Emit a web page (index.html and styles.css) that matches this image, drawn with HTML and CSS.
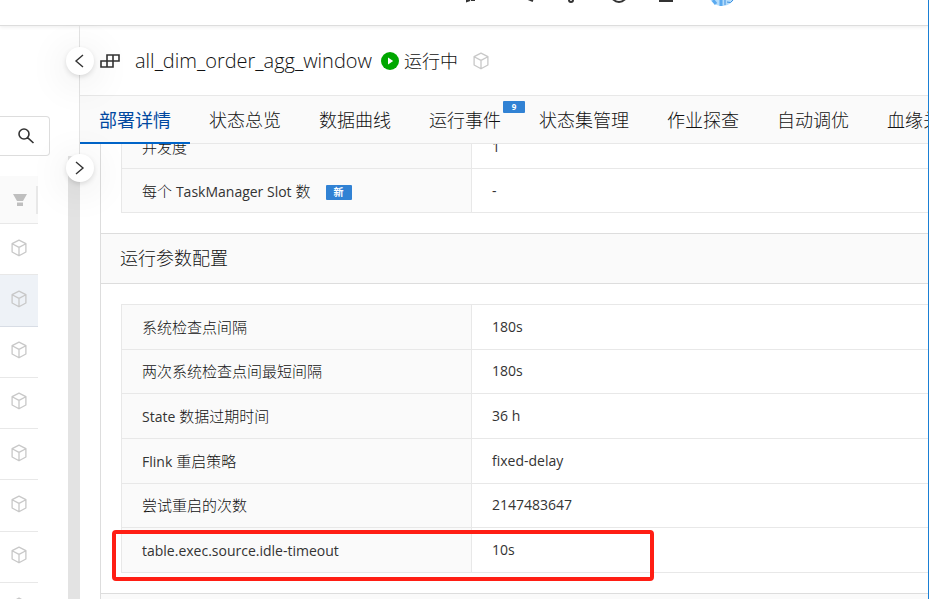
FILE: index.html
```
<!DOCTYPE html>
<html lang="zh-CN">
<head>
    <meta charset="UTF-8">
    <title>all_dim_order_agg_window</title>
    <link rel="stylesheet" href="styles.css">
</head>
<body>
    <svg class="defs" aria-hidden="true">
        <symbol id="cube" viewBox="0 0 18 18">
            <path d="M9 1.2 15.9 4.7V13L9 16.8 2.1 13V4.7ZM2.1 4.7 9 8.4 15.9 4.7M9 8.4V16.8" fill="none" stroke="currentColor" stroke-width="1.3" stroke-linejoin="round"/>
        </symbol>
    </svg>

    <header class="topbar">
        <svg class="topbar-icons" width="280" height="7" viewBox="460 0 280 7" aria-hidden="true">
            <g fill="none" stroke="#333" stroke-width="2">
                <path d="M467 0V1L470 0M471 0H475"/>
                <path d="M528 -1 533 1"/>
                <circle cx="571" cy="0" r="2"/>
                <circle cx="619" cy="-6" r="8"/>
                <path d="M659 1H673"/>
            </g>
            <circle cx="722" cy="-8" r="14" fill="#b4dcfb"/>
            <path d="M713 0 716 4M721 0V6" stroke="#5aaaf0" stroke-width="3"/>
            <path d="M725 0V5M727 2Q731 4 733 0" fill="none" stroke="#3b8fe0"/>
        </svg>
    </header>

    <div class="layout">
        <aside class="sidebar">
            <button class="search" aria-label="搜索">
                <svg width="18" height="18" viewBox="0 0 18 18"><path d="M12 7A5 5 0 1 1 2 7A5 5 0 1 1 12 7M10.6 10.6 16.5 16" fill="none" stroke="#333" stroke-width="1.6"/></svg>
            </button>
            <div class="filter">
                <svg width="14" height="14" viewBox="0 0 14 14"><path d="M0 1H14L10 8H4ZM4 9.5H10V13H4Z" fill="#bfbfbf"/></svg>
            </div>
            <table class="jobs">
                <tr><td><svg class="cube"><use href="#cube"/></svg></td></tr>
                <tr class="selected"><td><svg class="cube"><use href="#cube"/></svg></td></tr>
                <tr><td><svg class="cube"><use href="#cube"/></svg></td></tr>
                <tr><td><svg class="cube"><use href="#cube"/></svg></td></tr>
                <tr><td><svg class="cube"><use href="#cube"/></svg></td></tr>
                <tr><td><svg class="cube"><use href="#cube"/></svg></td></tr>
                <tr><td><svg class="cube"><use href="#cube"/></svg></td></tr>
                <tr><td><svg class="cube"><use href="#cube"/></svg></td></tr>
            </table>
            <div class="splitter"></div>
            <button class="toggle toggle-left" aria-label="收起">
                <svg width="12" height="14" viewBox="0 0 12 14"><path d="M9 1 2 7 9 13" fill="none" stroke="#333" stroke-width="1.4"/></svg>
            </button>
            <button class="toggle toggle-right" aria-label="展开">
                <svg width="12" height="14" viewBox="0 0 12 14"><path d="M2 1 9 7 2 13" fill="none" stroke="#333" stroke-width="1.4"/></svg>
            </button>
        </aside>

        <main class="main">
            <div class="title-bar">
                <svg width="20" height="14" viewBox="0 0 20 14"><path d="M7 1H19V7H7ZM1 7H13V13H1ZM7 7V13M13 1V7" fill="none" stroke="#333" stroke-width="1.6"/></svg>
                <h1>all_dim_order_agg_window</h1>
                <svg width="18" height="18" viewBox="0 0 18 18"><circle cx="9" cy="9" r="9" fill="#00a700"/><path d="M7 5.5 12.2 9 7 12.5Z" fill="#fff"/></svg>
                <span class="state">运行中</span>
                <svg class="cube"><use href="#cube"/></svg>
            </div>
            <nav class="tabs">
                <a class="active" href="#detail">部署详情</a>
                <a href="#status">状态总览</a>
                <a href="#metrics">数据曲线</a>
                <a href="#events">运行事件<span class="count">9</span></a>
                <a href="#state">状态集管理</a>
                <a href="#explore">作业探查</a>
                <a href="#tuning">自动调优</a>
                <a href="#lineage">血缘关系</a>
            </nav>
            <div class="viewport">
                <div class="content">
                    <div class="group">
                        <table class="params">
                            <tr><th scope="row">并发度</th><td>1</td></tr>
                            <tr><th scope="row">每个 <span class="en">TaskManager Slot</span> 数<span class="new">新</span></th><td>-</td></tr>
                        </table>
                    </div>
                    <h2>运行参数配置</h2>
                    <div class="group">
                        <table class="params params-runtime">
                            <tr><th scope="row">系统检查点间隔</th><td>180s</td></tr>
                            <tr><th scope="row">两次系统检查点间最短间隔</th><td>180s</td></tr>
                            <tr><th scope="row"><span class="en">State</span> 数据过期时间</th><td>36 h</td></tr>
                            <tr><th scope="row"><span class="en">Flink</span> 重启策略</th><td>fixed-delay</td></tr>
                            <tr><th scope="row">尝试重启的次数</th><td>2147483647</td></tr>
                            <tr><th scope="row"><span class="en">table.exec.source.idle-timeout</span></th><td>10s</td></tr>
                        </table>
                        <div class="highlight"></div>
                    </div>
                    <h2>日志配置</h2>
                </div>
            </div>
        </main>
    </div>
</body>
</html>
```
FILE: styles.css
```
* { box-sizing: border-box; }
body {
    margin: 0;
    height: 100vh;
    display: flex;
    flex-direction: column;
    overflow: hidden;
    border-right: 1px solid #1a7fd4;
    background: #fff;
    color: #111;
    font-family: "Open Sans", "Noto Sans CJK SC", sans-serif;
    font-size: 15px;
    font-weight: 300;
}
svg { display: block; flex: none; }
button { padding: 0; background: #fff; cursor: pointer; }
.defs { position: absolute; width: 0; height: 0; }
.cube { width: 18px; height: 18px; color: #c8c8c8; }

.topbar {
    flex: none;
    height: 26px;
    padding-left: 460px;
    border-bottom: 1px solid #ddd;
    box-shadow: 0 1px 4px rgba(0, 0, 0, 0.08);
}
.layout { flex: 1; display: flex; min-height: 0; }

/* 左侧作业列表 */
.sidebar { position: relative; z-index: 1; flex: none; width: 80px; padding-top: 90px; border-right: 1px solid #e3e3e3; }
.search {
    display: flex;
    align-items: center;
    justify-content: flex-end;
    width: 50px;
    height: 40px;
    padding-right: 14px;
    border: 1px solid #ddd;
    border-left: 0;
    border-radius: 0 4px 4px 0;
}
.filter {
    display: flex;
    align-items: center;
    width: 38px;
    height: 48px;
    margin-top: 20px;
    padding-left: 13px;
    border-bottom: 1px solid #e8e8e8;
    background: linear-gradient(#e8e8e8, #e8e8e8) right center / 2px 28px no-repeat #fafafa;
}
.jobs { width: 38px; height: 410px; border-spacing: 0; }
.jobs td { padding: 0 0 3px 10px; border-bottom: 1px solid #e8e8e8; }
.jobs .selected td { background: #eef2f7; border-color: #d8dde5; }
.splitter { position: absolute; top: 130px; right: -1px; bottom: 0; width: 12px; background: #e3e3e3; }
.toggle {
    position: absolute;
    right: -15px;
    display: flex;
    align-items: center;
    justify-content: center;
    width: 28px;
    height: 28px;
    border: 0;
    border-radius: 50%;
    box-shadow: 0 2px 5px rgba(0, 0, 0, 0.12), 0 6px 40px rgba(0, 0, 0, 0.14);
}
.toggle-left { top: 21px; }
.toggle-right { top: 128px; }

.main { flex: 1; display: flex; flex-direction: column; min-width: 0; }
.title-bar { display: flex; flex: none; align-items: center; height: 69px; padding-left: 20px; }
h1 { margin: 0 9px 0 15px; font-size: 20px; font-weight: 300; }
.state { margin: 0 14px 0 5px; font-size: 18px; line-height: 24px; }

.tabs {
    display: flex;
    flex: none;
    height: 49px;
    border-top: 1px solid #e8e8e8;
    border-bottom: 1px solid #e8e8e8;
    background: #fafafa;
    white-space: nowrap;
}
.tabs a { position: relative; height: 48px; padding: 0 19px; line-height: 48px; font-size: 18px; color: #111; text-decoration: none; }
.tabs .active { border-bottom: 2px solid #0064c8; color: #0048a0; font-weight: 400; }
.count {
    position: absolute;
    top: 5px;
    right: -5px;
    width: 22px;
    border-radius: 1px;
    background: #3182d4;
    color: #fff;
    font-size: 8px;
    font-weight: 700;
    line-height: 12px;
    text-align: center;
}

/* 部署详情 */
.viewport { flex: 1; min-height: 0; overflow: hidden; padding-left: 20px; }
.content { margin-top: -40px; border-left: 1px solid #ddd; }
.group { position: relative; padding: 20px 0 20px 20px; }
.params { width: 100%; height: 89px; border-collapse: collapse; table-layout: fixed; }
.params-runtime { height: 269px; }
.params th, .params td { padding: 0 20px; border: 1px solid #e8e8e8; border-right: 0; text-align: left; font-weight: 300; line-height: 24px; }
.params th { width: 350px; background: #fafafa; }
.params td, .params .en { font-size: 14px; font-weight: 400; color: #333; }
.params .en { line-height: 20px; }
.new {
    display: inline-block;
    width: 26px;
    margin-left: 15px;
    border-radius: 1px;
    background: #3182d4;
    color: #fff;
    font-size: 10px;
    font-weight: 700;
    line-height: 15px;
    text-align: center;
    vertical-align: 1px;
}
h2 {
    margin: 0;
    padding-left: 19px;
    border: 1px solid #ddd;
    border-width: 1px 0;
    background: #fafafa;
    font-size: 18px;
    font-weight: 300;
    line-height: 49px;
}
/* 红框标注 */
.highlight { position: absolute; left: 11px; bottom: 12px; width: 542px; height: 51px; border: 4px solid #ff1e14; border-radius: 4px; }
```
